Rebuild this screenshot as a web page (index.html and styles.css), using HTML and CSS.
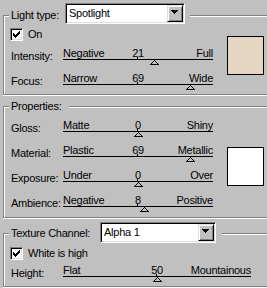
FILE: index.html
```html
<!DOCTYPE html>
<html>
<head>
<meta charset="utf-8">
<link rel="stylesheet" href="styles.css">
</head>
<body>
<fieldset class="group g1">
  <legend class="legend">
    <span class="gtitle w-light">Light type:</span>
    <div class="combo w-spot">
      <span class="combo-text">Spotlight</span>
      <span class="combo-btn"><svg width="7" height="4" viewBox="0 0 7 4" shape-rendering="crispEdges"><path d="M0 0h7v1H0z M1 1h5v1H1z M2 2h3v1H2z M3 3h1v1H3z" fill="#000"/></svg></span>
    </div>
  </legend>
  <div class="gbody">
    <div class="col">
      <div class="check">
        <span class="box"><svg width="7" height="7" viewBox="0 0 7 7" shape-rendering="crispEdges"><path d="M0 2h1v3H0z M1 3h1v3H1z M2 4h1v3H2z M3 3h1v3H3z M4 2h1v3H4z M5 1h1v3H5z M6 0h1v3H6z" fill="#000"/></svg></span>
        <span class="check-text">On</span>
      </div>
      <div class="srow">
        <span class="slabel">Intensity:</span>
        <div class="slider">
          <div class="stext"><span class="lo">Negative</span><span class="val">21</span><span class="hi">Full</span></div>
          <div class="track"><span class="tick"></span></div>
          <div class="thumbs"><svg class="thumb" style="left:87px" width="9" height="5" viewBox="0 0 9 5" shape-rendering="crispEdges"><path d="M4 0h1v1H4z M3 1h1v1H3z M5 1h1v1H5z M2 2h1v1H2z M6 2h1v1H6z M1 3h1v1H1z M7 3h1v1H7z M0 4h9v1H0z" fill="#000"/></svg></div>
        </div>
      </div>
      <div class="srow">
        <span class="slabel">Focus:</span>
        <div class="slider">
          <div class="stext"><span class="lo">Narrow</span><span class="val">69</span><span class="hi">Wide</span></div>
          <div class="track"><span class="tick"></span></div>
          <div class="thumbs"><svg class="thumb" style="left:123px" width="9" height="5" viewBox="0 0 9 5" shape-rendering="crispEdges"><path d="M4 0h1v1H4z M3 1h1v1H3z M5 1h1v1H5z M2 2h1v1H2z M6 2h1v1H6z M1 3h1v1H1z M7 3h1v1H7z M0 4h9v1H0z" fill="#000"/></svg></div>
        </div>
      </div>
    </div>
    <div class="swatch beige"></div>
  </div>
</fieldset>

<fieldset class="group g2">
  <legend class="legend">
    <span class="gtitle">Properties:</span>
  </legend>
  <div class="gbody">
    <div class="col">
      <div class="srow">
        <span class="slabel">Gloss:</span>
        <div class="slider">
          <div class="stext"><span class="lo">Matte</span><span class="val">0</span><span class="hi">Shiny</span></div>
          <div class="track"><span class="tick"></span></div>
          <div class="thumbs"><svg class="thumb" style="left:71px" width="9" height="5" viewBox="0 0 9 5" shape-rendering="crispEdges"><path d="M4 0h1v1H4z M3 1h1v1H3z M5 1h1v1H5z M2 2h1v1H2z M6 2h1v1H6z M1 3h1v1H1z M7 3h1v1H7z M0 4h9v1H0z" fill="#000"/></svg></div>
        </div>
      </div>
      <div class="srow">
        <span class="slabel">Material:</span>
        <div class="slider">
          <div class="stext"><span class="lo">Plastic</span><span class="val">69</span><span class="hi">Metallic</span></div>
          <div class="track"><span class="tick"></span></div>
          <div class="thumbs"><svg class="thumb" style="left:123px" width="9" height="5" viewBox="0 0 9 5" shape-rendering="crispEdges"><path d="M4 0h1v1H4z M3 1h1v1H3z M5 1h1v1H5z M2 2h1v1H2z M6 2h1v1H6z M1 3h1v1H1z M7 3h1v1H7z M0 4h9v1H0z" fill="#000"/></svg></div>
        </div>
      </div>
      <div class="srow">
        <span class="slabel">Exposure:</span>
        <div class="slider">
          <div class="stext"><span class="lo">Under</span><span class="val">0</span><span class="hi">Over</span></div>
          <div class="track"><span class="tick"></span></div>
          <div class="thumbs"><svg class="thumb" style="left:71px" width="9" height="5" viewBox="0 0 9 5" shape-rendering="crispEdges"><path d="M4 0h1v1H4z M3 1h1v1H3z M5 1h1v1H5z M2 2h1v1H2z M6 2h1v1H6z M1 3h1v1H1z M7 3h1v1H7z M0 4h9v1H0z" fill="#000"/></svg></div>
        </div>
      </div>
      <div class="srow">
        <span class="slabel">Ambience:</span>
        <div class="slider">
          <div class="stext"><span class="lo">Negative</span><span class="val">8</span><span class="hi">Positive</span></div>
          <div class="track"><span class="tick"></span></div>
          <div class="thumbs"><svg class="thumb" style="left:77px" width="9" height="5" viewBox="0 0 9 5" shape-rendering="crispEdges"><path d="M4 0h1v1H4z M3 1h1v1H3z M5 1h1v1H5z M2 2h1v1H2z M6 2h1v1H6z M1 3h1v1H1z M7 3h1v1H7z M0 4h9v1H0z" fill="#000"/></svg></div>
        </div>
      </div>
    </div>
    <div class="swatch white"></div>
  </div>
</fieldset>

<fieldset class="group g3">
  <legend class="legend">
    <span class="gtitle w-tex">Texture Channel:</span>
    <div class="combo w-alpha">
      <span class="combo-text">Alpha 1</span>
      <span class="combo-btn"><svg width="7" height="4" viewBox="0 0 7 4" shape-rendering="crispEdges"><path d="M0 0h7v1H0z M1 1h5v1H1z M2 2h3v1H2z M3 3h1v1H3z" fill="#000"/></svg></span>
    </div>
  </legend>
  <div class="gbody">
    <div class="col">
      <div class="check">
        <span class="box"><svg width="7" height="7" viewBox="0 0 7 7" shape-rendering="crispEdges"><path d="M0 2h1v3H0z M1 3h1v3H1z M2 4h1v3H2z M3 3h1v3H3z M4 2h1v3H4z M5 1h1v3H5z M6 0h1v3H6z" fill="#000"/></svg></span>
        <span class="check-text">White is high</span>
      </div>
      <div class="srow">
        <span class="slabel">Height:</span>
        <div class="slider wide">
          <div class="stext"><span class="lo">Flat</span><span class="val">50</span><span class="hi">Mountainous</span></div>
          <div class="track"><span class="tick"></span></div>
          <div class="thumbs"><svg class="thumb" style="left:90px" width="9" height="5" viewBox="0 0 9 5" shape-rendering="crispEdges"><path d="M4 0h1v1H4z M3 1h1v1H3z M5 1h1v1H5z M2 2h1v1H2z M6 2h1v1H6z M1 3h1v1H1z M7 3h1v1H7z M0 4h9v1H0z" fill="#000"/></svg></div>
        </div>
      </div>
    </div>
  </div>
</fieldset>
</body>
</html>
```

FILE: styles.css
```css
* { box-sizing: border-box; }

html, body {
  margin: 0;
  padding: 0;
}

body {
  width: 267px;
  height: 288px;
  overflow: hidden;
  background: #c0c0c0;
  font-family: "Liberation Sans", Arial, sans-serif;
  font-size: 11px;
  letter-spacing: -0.25px;
  color: #000;
}

.group {
  display: block;
  margin: 0 0 0 3px;
  padding: 0;
  min-width: 0;
  border: 1px solid #808080;
  border-right: 0;
  box-shadow: inset 1px 1px 0 #fff, 0 1px 0 #fff;
}

.g1 { margin-top: 3px; }
.g2 { margin-top: 5px; }
.g3 { margin-top: 4px; }

.legend {
  display: flex;
  align-items: center;
  margin-left: 5px;
  padding: 0 5px 0 2px;
  background: #c0c0c0;
}

.g1 .legend { height: 25px; }
.g2 .legend { height: 13px; padding-right: 8px; }
.g3 .legend { height: 23px; padding-right: 6px; }

.gtitle {
  line-height: 13px;
  white-space: nowrap;
  flex: none;
}

.w-light { width: 54px; }
.w-tex { width: 89px; }

.combo {
  align-self: flex-start;
  height: 21px;
  display: flex;
  align-items: center;
  background: #fff;
  border: 1px solid;
  border-color: #808080 #fff #fff #808080;
  box-shadow: inset 1px 1px 0 #000, inset -1px -1px 0 #dfdfdf;
  padding: 1px;
  flex: none;
}

.w-spot { width: 120px; }
.w-alpha { width: 116px; }

.combo-text {
  flex: 1;
  padding-left: 2px;
  line-height: 13px;
  white-space: nowrap;
}

.combo-btn {
  flex: none;
  width: 16px;
  height: 17px;
  background: #c0c0c0;
  border: 1px solid;
  border-color: #dfdfdf #000 #000 #dfdfdf;
  box-shadow: inset 1px 1px 0 #fff, inset -1px -1px 0 #808080;
  display: flex;
  align-items: flex-start;
  justify-content: flex-start;
  padding: 4px 0 0 3px;
}

.combo-btn svg { display: block; }

.gbody {
  display: flex;
  align-items: flex-start;
}

.g1 .gbody { padding: 0 0 4px 7px; }
.g2 .gbody { padding: 6px 0 5px 7px; }
.g3 .gbody { padding: 2px 0 4px 7px; }

.col {
  display: flex;
  flex-direction: column;
  flex: none;
}

.check {
  display: flex;
  align-items: center;
  height: 13px;
  margin-left: -1px;
}

.box {
  flex: none;
  width: 13px;
  height: 13px;
  padding: 2px;
  background: #fff;
  border: 1px solid;
  border-color: #808080 #fff #fff #808080;
  box-shadow: inset 1px 1px 0 #000, inset -1px -1px 0 #dfdfdf;
}

.box svg { display: block; }

.check-text {
  margin-left: 5px;
  line-height: 13px;
  white-space: nowrap;
}

.srow {
  display: flex;
  height: 18px;
}

.srow + .srow { margin-top: 7px; }
.check + .srow { margin-top: 6px; }
.g3 .check + .srow { margin-top: 4px; }

.slabel {
  flex: none;
  width: 52px;
  padding-top: 3px;
  line-height: 13px;
  white-space: nowrap;
}

.slider {
  flex: none;
  width: 150px;
}

.slider.wide { width: 188px; }

.stext {
  display: grid;
  grid-template-columns: minmax(0, 1fr) auto minmax(0, 1fr);
  height: 12px;
  line-height: 12px;
  white-space: nowrap;
}

.stext .lo { justify-self: start; }
.stext .hi { justify-self: end; }

.track {
  height: 1px;
  background: #000;
  position: relative;
}

.tick {
  position: absolute;
  left: calc(50% - 1px);
  top: -2px;
  width: 1px;
  height: 2px;
  background: #000;
}

.thumbs {
  height: 5px;
  position: relative;
}

.thumb {
  position: absolute;
  top: 0;
  display: block;
}

.swatch {
  flex: none;
  width: 37px;
  height: 39px;
  border: 1px solid #000;
  margin-left: 14px;
}

.g1 .swatch { margin-top: 8px; }
.g2 .swatch { margin-top: 28px; }

.beige { background: #e6d5c0; }
.white { background: #fff; }
```
